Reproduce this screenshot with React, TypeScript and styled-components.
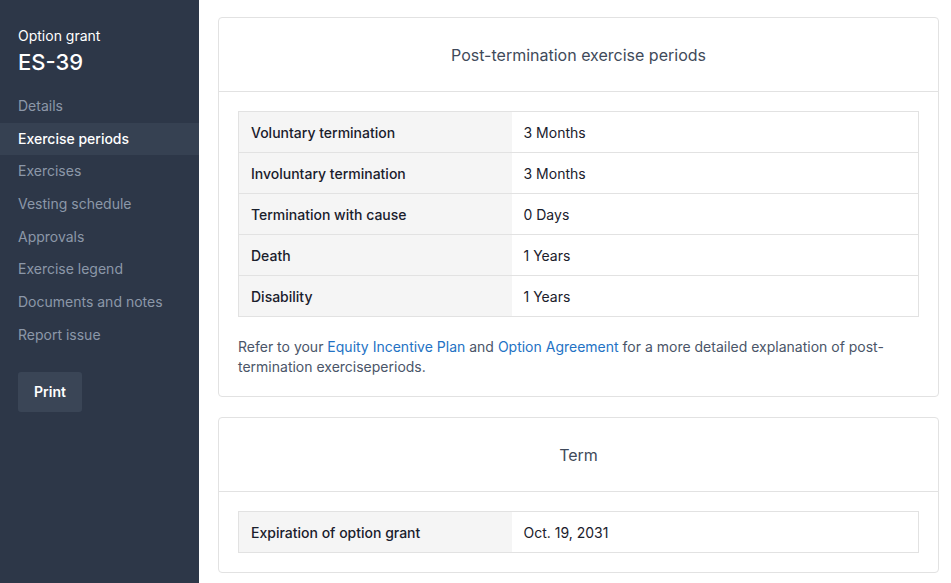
import React from "react";
import styled, { createGlobalStyle } from "styled-components";

const Global = createGlobalStyle`
  html, body { margin: 0; padding: 0; background: #fff; }
  body { font-family: Inter, "Noto Sans", Arial, sans-serif; -webkit-font-smoothing: antialiased; }
  #root { min-height: 100vh; }
  * { box-sizing: border-box; }
`;

const Layout = styled.div`
  display: flex;
  min-height: 583px;
  height: 583px;
  overflow: hidden;
`;

const Sidebar = styled.aside`
  width: 199px;
  flex: none;
  background: #2d3748;
  padding-top: 27px;
  display: flex;
  flex-direction: column;
`;

const Eyebrow = styled.div`
  color: #fff;
  font-size: 14px;
  line-height: 18px;
  padding: 0 18px;
`;

const GrantId = styled.div`
  color: #fff;
  font-size: 22px;
  line-height: 28px;
  font-weight: 500;
  padding: 0 18px;
  margin-top: 3px;
  margin-bottom: 14px;
`;

const NavItem = styled.a<{ $active?: boolean }>`
  display: block;
  padding: 0 18px;
  height: 32.7px;
  line-height: 32.7px;
  font-size: 14px;
  color: ${(p) => (p.$active ? "#fff" : "#8c97a8")};
  background: ${(p) => (p.$active ? "#364152" : "transparent")};
  font-weight: ${(p) => (p.$active ? 500 : 400)};
  text-decoration: none;
`;

const PrintButton = styled.button`
  margin: 20px 0 0 18px;
  width: 64px;
  height: 40px;
  border: none;
  border-radius: 3px;
  background: #3a4556;
  color: #fff;
  font-family: inherit;
  font-size: 14px;
  font-weight: 600;
`;

const Main = styled.main`
  flex: 1;
  padding: 17px 12px 0 19px;
  display: flex;
  flex-direction: column;
  gap: 20px;
`;

const Card = styled.section`
  border: 1px solid #e2e2e2;
  border-radius: 4px;
  background: #fff;
`;

const CardHeader = styled.h2`
  margin: 0;
  height: 74px;
  display: flex;
  align-items: center;
  justify-content: center;
  font-size: 16px;
  font-weight: 400;
  color: #3f4a5a;
  border-bottom: 1px solid #e2e2e2;
`;

const CardBody = styled.div`
  padding: 19px;
`;

const Table = styled.table`
  width: 100%;
  border-collapse: collapse;
  border: 1px solid #e2e2e2;
`;

const Row = styled.tr`
  height: 41px;
  border-bottom: 1px solid #e2e2e2;
  &:last-child { border-bottom: none; }
`;

const Label = styled.th`
  width: 273px;
  background: #f5f5f5;
  text-align: left;
  font-size: 14px;
  font-weight: 500;
  color: #1a202c;
  padding: 0 12px;
`;

const Value = styled.td`
  font-size: 14px;
  color: #1a202c;
  padding: 0 12px;
`;

const Note = styled.p`
  margin: 20px 0 0;
  font-size: 14px;
  line-height: 20px;
  color: #4a5568;
`;

const Link = styled.a`
  color: #2372c4;
  text-decoration: none;
`;

const nav = [
  "Details",
  "Exercise periods",
  "Exercises",
  "Vesting schedule",
  "Approvals",
  "Exercise legend",
  "Documents and notes",
  "Report issue",
];

const periods: [string, string][] = [
  ["Voluntary termination", "3 Months"],
  ["Involuntary termination", "3 Months"],
  ["Termination with cause", "0 Days"],
  ["Death", "1 Years"],
  ["Disability", "1 Years"],
];

export default function App() {
  return (
    <Layout>
      <Global />
      <Sidebar>
        <Eyebrow>Option grant</Eyebrow>
        <GrantId>ES-39</GrantId>
        {nav.map((n) => (
          <NavItem key={n} $active={n === "Exercise periods"}>
            {n}
          </NavItem>
        ))}
        <PrintButton>Print</PrintButton>
      </Sidebar>
      <Main>
        <Card>
          <CardHeader>Post-termination exercise periods</CardHeader>
          <CardBody>
            <Table>
              <tbody>
                {periods.map(([l, v]) => (
                  <Row key={l}>
                    <Label>{l}</Label>
                    <Value>{v}</Value>
                  </Row>
                ))}
              </tbody>
            </Table>
            <Note>
              Refer to your <Link>Equity Incentive Plan</Link> and{" "}
              <Link>Option Agreement</Link> for a more detailed explanation of
              post-termination exerciseperiods.
            </Note>
          </CardBody>
        </Card>
        <Card>
          <CardHeader>Term</CardHeader>
          <CardBody>
            <Table>
              <tbody>
                <Row>
                  <Label>Expiration of option grant</Label>
                  <Value>Oct. 19, 2031</Value>
                </Row>
              </tbody>
            </Table>
          </CardBody>
        </Card>
      </Main>
    </Layout>
  );
}
